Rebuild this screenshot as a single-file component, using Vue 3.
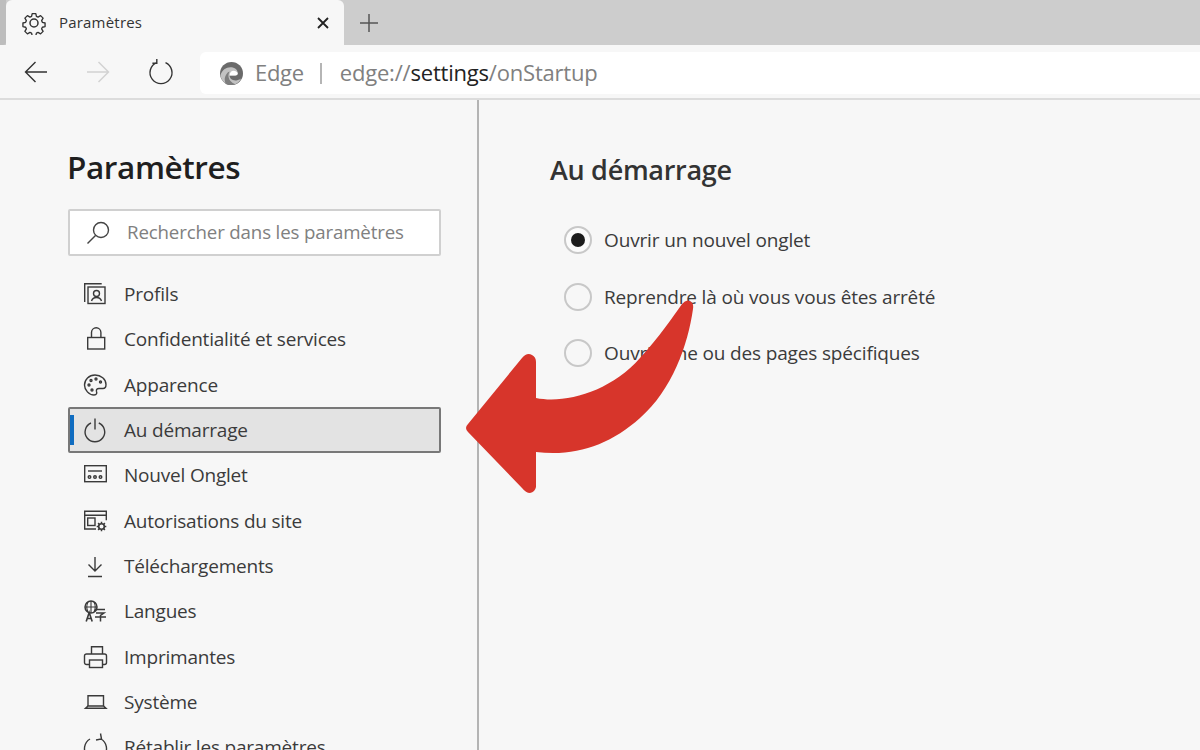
<script setup>
const navItems = [
  { label: 'Profils', icon: 'profile' },
  { label: 'Confidentialité et services', icon: 'lock' },
  { label: 'Apparence', icon: 'palette' },
  { label: 'Au démarrage', icon: 'power', active: true },
  { label: 'Nouvel Onglet', icon: 'newtab' },
  { label: 'Autorisations du site', icon: 'site' },
  { label: 'Téléchargements', icon: 'download' },
  { label: 'Langues', icon: 'lang' },
  { label: 'Imprimantes', icon: 'printer' },
  { label: 'Système', icon: 'laptop' },
  { label: 'Rétablir les paramètres', icon: 'reset' },
];

const startupOptions = [
  { label: 'Ouvrir un nouvel onglet', checked: true },
  { label: 'Reprendre là où vous vous êtes arrêté', checked: false },
  { label: 'Ouvrir une ou des pages spécifiques', checked: false },
];
</script>

<template>
  <div class="window">
    <div class="tabstrip">
      <div class="tab-edge"></div>
      <div class="tab">
        <svg class="tab-gear" viewBox="0 0 24 24" fill="none" stroke="#333" stroke-width="1.5" stroke-linejoin="round">
          <path d="M10 1.5h4l.7 3.1 1.8.8 2.8-1.6 2.8 2.8-1.6 2.8.8 1.8 3 .8v4l-3 .7-.8 1.8 1.6 2.8-2.8 2.8-2.8-1.6-1.8.8-.7 3h-4l-.7-3-1.8-.8-2.8 1.6-2.8-2.8 1.6-2.8-.8-1.8-3-.7v-4l3-.8.8-1.8-1.6-2.8 2.8-2.8 2.8 1.6 1.8-.8z" transform="translate(1.2 1.2) scale(.9)" />
          <circle cx="12" cy="12" r="4" />
        </svg>
        <span class="tab-title">Paramètres</span>
        <svg class="tab-close" viewBox="0 0 12 12" stroke="#222" stroke-width="1.8">
          <path d="M1 1l10 10M11 1L1 11" />
        </svg>
      </div>
      <svg class="tab-new" viewBox="0 0 20 20" stroke="#555" stroke-width="1.5">
        <path d="M10 1v18M1 10h18" />
      </svg>
    </div>

    <div class="toolbar">
      <svg class="nav-btn back" viewBox="0 0 24 24" fill="none" stroke="#333" stroke-width="1.4">
        <path d="M22 12H0.500M10.500 2L0.500 12l10 10" />
      </svg>
      <svg class="nav-btn forward" viewBox="0 0 24 24" fill="none" stroke="#d2d2d2" stroke-width="1.4">
        <path d="M0 12h21.500M11.500 2l10 10-10 10" />
      </svg>
      <svg class="nav-btn reload" viewBox="0 0 24 24" fill="none" stroke="#333" stroke-width="1.4">
        <path d="M7.500 2.600A11 11 0 1 0 16.500 2.600M7.800 -1v4.200H3.400" />
      </svg>
      <div class="address">
        <svg class="edge-logo" viewBox="0 0 24 24">
          <circle cx="12" cy="12" r="12" fill="#6a6a6a" />
          <path d="M0.500 14C2 8 7 5 12 5.500c4 .4 6.500 3 6.500 6 0 1.500-1 2.500-2.500 2.500H10c0 3 3 6 8 5 2-.4 3-1 4-2-1.500 4-5.500 7-10 7C6 24 1.500 19.500.5 14z" fill="#c2c2c2" />
          <path d="M10 14c0-3 2-5 4-5 2.500 0 4.500 1.500 4.500 3 0 1.200-1 2-2.500 2z" fill="#fff" />
          <path d="M6 23c-1.500-3-1.500-7 .5-10 1-1.500 2-2.500 3.500-3-1 2-1.500 4-1 6 .5 3 3 6 7 7.200-3.500 1.500-7 1.300-10-.2z" fill="#7d7d7d" />
        </svg>
        <span class="addr-brand">Edge</span>
        <span class="addr-sep"></span>
        <span class="addr-url">edge://<b>settings</b>/onStartup</span>
      </div>
    </div>

    <div class="page">
      <aside class="sidebar">
        <h1>Paramètres</h1>
        <div class="search">
          <svg class="search-icon" viewBox="0 0 24 24" fill="none" stroke="#444" stroke-width="1.4">
            <circle cx="15" cy="9" r="7.500" />
            <path d="M9.500 14.500L1.500 22.500" />
          </svg>
          <span class="search-text">Rechercher dans les paramètres</span>
        </div>
        <nav class="nav">
          <div v-for="item in navItems" :key="item.label" class="nav-item" :class="{ active: item.active }">
            <svg class="nav-icon" viewBox="0 0 24 24" fill="none" stroke="#3a3a3a" stroke-width="1.4">
              <g v-if="item.icon === 'profile'">
                <path d="M1.700 20V1.700h17" />
                <rect x="5" y="5" width="17" height="16.500" />
                <circle cx="13.500" cy="11.500" r="3" />
                <path d="M8.500 19c.8-2.500 2.500-3.500 5-3.500s4.200 1 5 3.500" />
              </g>
              <g v-else-if="item.icon === 'lock'">
                <rect x="4.700" y="10.500" width="17" height="11.500" />
                <path d="M8.500 10.500V5.500a4.700 4.700 0 0 1 9.400 0v5" />
              </g>
              <g v-else-if="item.icon === 'palette'">
                <path d="M12 2C6 2 1.500 6.500 1.500 12c0 5 4.500 10 9.500 10 3 0 3-2 2.500-3.500-.5-2 .5-3 2.500-3h4c2 0 3-2 3-4C23 6 18 2 12 2z" />
                <circle cx="6" cy="12" r="1" />
                <circle cx="8" cy="7.500" r="1" />
                <circle cx="13" cy="6" r="1" />
                <circle cx="17.500" cy="9" r="1" />
                <circle cx="9" cy="17" r="1" />
              </g>
              <g v-else-if="item.icon === 'power'">
                <path d="M8 5a9.800 9.800 0 1 0 7.800 0M12 0.500v11" />
              </g>
              <g v-else-if="item.icon === 'newtab'">
                <rect x="1.700" y="2.700" width="21.600" height="16" />
                <path d="M5 8h14" />
                <circle cx="6.500" cy="14" r="1.300" />
                <circle cx="12" cy="14" r="1.300" />
                <circle cx="17.500" cy="14" r="1.300" />
              </g>
              <g v-else-if="item.icon === 'site'">
                <path d="M13 20H1.700V2.300h21.600v9M1.700 6.300h21.600" />
                <rect x="4.700" y="9" width="7.300" height="7.500" />
                <circle cx="18.500" cy="17.500" r="2.800" stroke-width="1.600" />
                <path d="M18.500 12.700v2M18.500 20.300v2M13.700 17.500h2M21.300 17.500h2M15.100 14.100l1.400 1.400M20.500 19.500l1.400 1.400M15.100 20.900l1.400-1.400M20.500 15.500l1.400-1.400" stroke-width="1.500" />
              </g>
              <g v-else-if="item.icon === 'download'">
                <path d="M12 3v14M5.500 10.500L12 17l6.500-6.500M5 22.500h14" />
              </g>
              <g v-else-if="item.icon === 'lang'">
                <circle cx="8" cy="8" r="6" stroke-width="1.500" />
                <path d="M2 8h12M8 2v12M5 3c-1.500 3-1.500 7 0 10M11 3c1.500 3 1.500 7 0 10" stroke-width="1.100" />
                <path d="M3.200 22.500l3-9 3 9M4.200 19.500h4" stroke-width="1.600" />
                <path d="M12 10.500h10M13 14h8l-3.500 2.500v6M12 18h11" stroke-width="1.500" />
              </g>
              <g v-else-if="item.icon === 'printer'">
                <path d="M8.500 9V1.700h11V9" />
                <path d="M6.500 19.500H3.500a2 2 0 0 1-2-2V11a2 2 0 0 1 2-2h18a2 2 0 0 1 2 2v6.500a2 2 0 0 1-2 2h-2.500" />
                <rect x="6.500" y="15" width="13" height="7.500" />
              </g>
              <g v-else-if="item.icon === 'laptop'">
                <path d="M5 16V5.700h15.500V16" />
                <path d="M2.500 18.300h20.500L20.500 16H5z" />
              </g>
              <g v-else>
                <path d="M7 4a11 11 0 1 0 11 0M17.500 -1.500l1 5.500-5.500 1" />
              </g>
            </svg>
            <span class="nav-label">{{ item.label }}</span>
          </div>
        </nav>
      </aside>

      <main class="content">
        <h2>Au démarrage</h2>
        <div class="options">
          <label v-for="opt in startupOptions" :key="opt.label" class="option">
            <span class="radio" :class="{ checked: opt.checked }"></span>
            <span>{{ opt.label }}</span>
          </label>
        </div>
      </main>
    </div>

    <svg class="arrow" viewBox="0 0 1200 750">
      <path d="M466 428 Q466 426 468 424 L522 358 Q527 352 532 355 Q536 357 536 362 L536 398 C565 404 610 392 640 358 C660 336 672 318 682 304 Q686 299 690 301 Q694 303 693 309 C688 345 672 390 640 418 C610 445 575 457 536 452 L536 487 Q535 492 530 493 Q526 493 522 488 L468 432 Q466 430 466 428 Z" fill="#d7352b" />
    </svg>
  </div>
</template>

<style>
html, body { margin: 0; overflow: hidden; }
</style>

<style scoped>
.window {
  position: relative;
  width: 1200px;
  height: 750px;
  overflow: hidden;
  background: #f7f7f7;
  font-family: "Open Sans", "Noto Sans", sans-serif;
  color: #3b3b3b;
}

/* tab strip */
.tabstrip { display: flex; align-items: stretch; height: 45px; background: #cdcdcd; }
.tab-edge { width: 6px; background: #bdbdbd; border-bottom-right-radius: 3px; }
.tab {
  width: 338px;
  background: #f7f7f7;
  border-radius: 6px 6px 0 0;
  display: flex;
  align-items: center;
  padding-left: 16px;
  box-sizing: border-box;
}
.tab-gear { width: 24px; height: 24px; }
.tab-title { margin: 0 0 2px 13px; font-size: 15px; color: #333; letter-spacing: 0.2px; }
.tab-close { width: 12px; height: 12px; margin-left: auto; margin-right: 15px; }
.tab-new { width: 20px; height: 20px; margin: 13px 0 0 15px; }

/* toolbar */
.toolbar {
  height: 53px;
  display: flex;
  align-items: center;
  border-bottom: 2px solid #dcdcdc;
  box-sizing: content-box;
}
.nav-btn { width: 24px; height: 24px; overflow: visible; }
.back { margin-left: 25px; }
.forward { margin-left: 38px; }
.reload { margin-left: 38px; }
.address {
  width: 1000px;
  height: 42px;
  margin: 3px 0 0 27px;
  background: #fff;
  border-radius: 6px 0 0 6px;
  display: flex;
  align-items: center;
  padding: 0 0 2px 20px;
  box-sizing: border-box;
  font-size: 22px;
  color: #808080;
}
.edge-logo { width: 23px; height: 23px; margin-top: 2px; }
.addr-brand { margin-left: 12px; letter-spacing: -0.3px; }
.addr-sep { width: 2px; height: 21px; background: #b5b5b5; margin: 2px 18px 0 16px; }
.addr-url { letter-spacing: -0.2px; }
.addr-url b { font-weight: 400; color: #222; }

/* page */
.page { display: flex; height: 650px; }
.sidebar {
  border-right: 2px solid #b4b4b4;
  padding: 46px 0 0 68px;
  box-sizing: content-box;
  flex: none;
  width: 409px;
}
h1 {
  margin: 0 0 0 -1px;
  height: 63px;
  font-size: 31.500px;
  line-height: 41px;
  font-weight: 600;
  color: #1f1f1f;
  letter-spacing: -0.4px;
}
.search {
  width: 373px;
  height: 47px;
  box-sizing: border-box;
  background: #fff;
  border: 2px solid #d0d0d0;
  border-radius: 2px;
  display: flex;
  align-items: center;
  padding-left: 16px;
  font-size: 18.700px;
  color: #808080;
  letter-spacing: -0.15px;
}
.search-text { margin-bottom: 2px; }
.search-icon { width: 24px; height: 24px; margin-right: 17px; }
.nav { margin-top: 15.300px; }
.nav-item {
  width: 373px;
  height: 45.330px;
  box-sizing: border-box;
  display: flex;
  align-items: center;
  padding-left: 15px;
  font-size: 19px;
  color: #3b3b3b;
  position: relative;
  letter-spacing: -0.2px;
}
.nav-label { white-space: nowrap; }
.nav-item.active {
  background: #e3e3e3;
  border: 2px solid #787878;
  border-radius: 2px;
  padding-left: 13px;
}
.nav-item.active::before {
  content: "";
  position: absolute;
  left: 0;
  top: 6px;
  bottom: 6px;
  width: 4px;
  background: #0f6cc0;
}
.nav-icon { width: 24px; height: 24px; margin-right: 17px; flex: none; overflow: visible; }

/* content */
.content { padding: 47px 0 0 71px; }
h2 {
  margin: 0;
  height: 65px;
  font-size: 27px;
  line-height: 46px;
  font-weight: 600;
  color: #333;
  letter-spacing: -0.3px;
}
.options { display: flex; flex-direction: column; }
.option {
  height: 56.500px;
  display: flex;
  align-items: center;
  padding-left: 14px;
  font-size: 19px;
  color: #3b3b3b;
  letter-spacing: -0.15px;
}
.radio {
  width: 28px;
  height: 28px;
  box-sizing: border-box;
  border: 2px solid #c8c8c8;
  border-radius: 50%;
  margin-right: 12px;
  display: flex;
  align-items: center;
  justify-content: center;
}
.radio.checked { background: #fbfbfb; }
.radio.checked::after {
  content: "";
  width: 14px;
  height: 14px;
  border-radius: 50%;
  background: #1c1c1c;
}

/* red arrow laid over the page */
.arrow { position: absolute; left: 0; top: 0; width: 1200px; height: 750px; pointer-events: none; }
</style>
